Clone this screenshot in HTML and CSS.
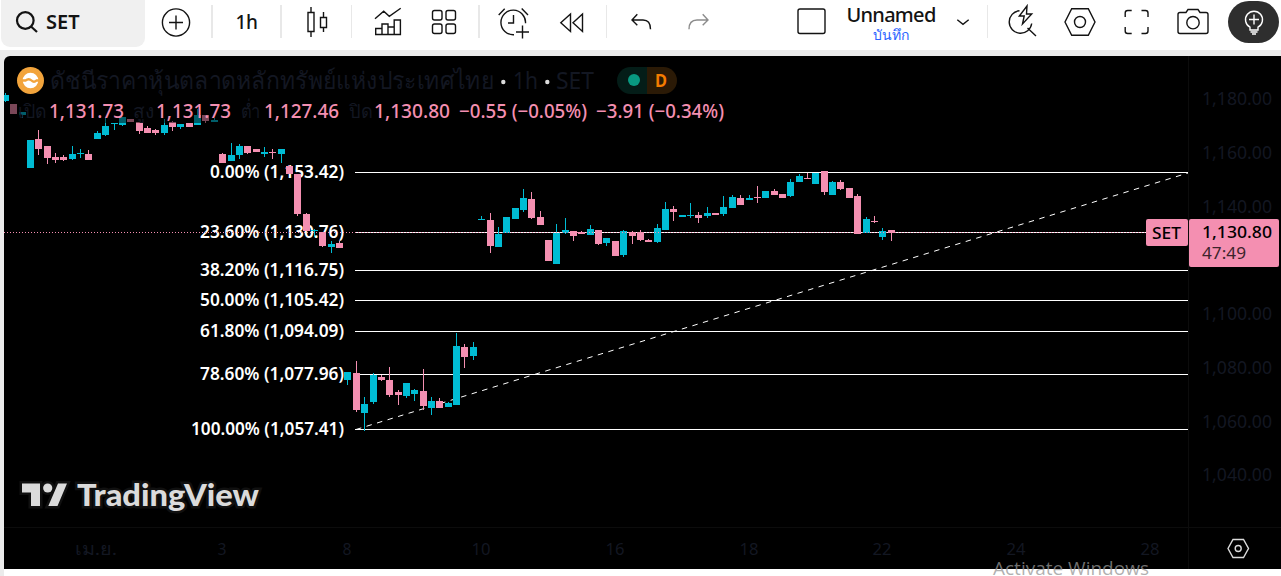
FILE: index.html
```html
<!DOCTYPE html>
<html lang="th">
<head>
    <meta charset="UTF-8" />
    <meta name="viewport" content="width=device-width, initial-scale=1.0" />
    <title>SET 1,130.80</title>
    <link rel="stylesheet" href="styles.css">
</head>
<body>
    <header class="toolbar">
        <div class="search">
            <svg class="search-icon" viewBox="0 0 24 24"><circle cx="10.3" cy="10.5" r="8.3" /><path d="M16 16.5l6 5.5" /></svg>
            <span>SET</span>
        </div>
        <div class="tool tool-add">
            <svg class="icon" viewBox="-18 -22 36 44"><circle cx="0" cy=".5" r="13.6" /><path d="M-7 .5H7M0-6.5v14" /></svg>
        </div>
        <div class="separator"></div>
        <div class="tool interval">1h</div>
        <div class="separator"></div>
        <div class="tool">
            <svg class="icon" viewBox="-18 -22 36 44"><path d="M-9-9.5h6v19h-6zM-6-15v5.500M-6 9.500V15M3.500-4.500h6v10h-6zM6.500-10v5.500M6.500 5.500V10" /></svg>
        </div>
        <div class="separator"></div>
        <div class="tool">
            <svg class="icon" viewBox="-18 -22 36 44"><path d="M-13-3.300l8.700-7.400 5.600 5L12.700-13.700M-12.300 12.500v-6h6.300v-4.500h6v3h6.200V-2h6.200v14.500zM-6 6.500v6M0 5v7.500M6.200 5v7.500" /></svg>
        </div>
        <div class="tool">
            <svg class="icon" viewBox="-18 -22 36 44"><rect x="-11.500" y="-11.500" width="9.500" height="9.500" rx="2" /><rect x="2" y="-11.500" width="9.500" height="9.500" rx="2" /><rect x="-11.500" y="2" width="9.500" height="9.500" rx="2" /><rect x="2" y="2" width="9.500" height="9.500" rx="2" /></svg>
        </div>
        <div></div>
        <div class="separator"></div>
        <div class="tool">
            <svg class="icon" viewBox="-18 -22 36 44"><path d="M11.500 1.300A12.300 12.300 0 1 0 0 12.700M-15.300-7l6-6.300M7.700-13.500l6.300 6.500M-.500-7V1h-5.500M2 10h13M8.500 3.500v13" /></svg>
        </div>
        <div class="tool">
            <svg class="icon" viewBox="-18 -22 36 44"><path d="M-1.500-8l-9.700 8.700 9.700 8.800zM10.500-8L1 .7l9.500 8.800z" /></svg>
        </div>
        <div></div>
        <div class="separator"></div>
        <div class="tool">
            <svg class="icon" viewBox="-18 -22 36 44"><path d="M-3.700-7.700L-9-2l5.300 5.300M-9-2H2c5 0 7.500 3 7.500 9.300" /></svg>
        </div>
        <div class="tool disabled">
            <svg class="icon" viewBox="-18 -22 36 44"><path d="M4.700-7.700L10-2 4.700 3.300M10-2H-1c-5 0-8 3-8 9.300" /></svg>
        </div>
        <div></div>
        <div class="tool">
            <svg class="icon" viewBox="-18 -22 36 44"><rect x="-13" y="-13" width="27" height="24.500" rx="2" /></svg>
        </div>
        <div class="layout-name">
            <span class="name">Unnamed</span>
            <span class="save">บันทึก</span>
        </div>
        <div class="tool tool-menu">
            <svg class="icon" viewBox="-18 -22 36 44"><path d="M-5.700-2.300L0 2.300l5.700-4.600" /></svg>
        </div>
        <div class="separator"></div>
        <div class="tool">
            <svg class="icon" viewBox="-18 -22 36 44"><path d="M-3.500-11.300A11.300 11.300 0 1 0 8.700 1.500M4.500 6l8.500 8M4-16l-7.700 10H1.200L-.5 2 8.700-8H3.500z" /></svg>
        </div>
        <div class="tool">
            <svg class="icon" viewBox="-18 -22 36 44"><path d="M-8.300-13.300H8.300L15 0 8.300 13.200H-8.300L-15 0z" /><circle cx="0" cy="0" r="5.500" /></svg>
        </div>
        <div class="tool">
            <svg class="icon" viewBox="-18 -22 36 44"><path d="M-10.800-5v-4q0-2.500 2.500-2.500h4M5.500-11.500h4q2.500 0 2.500 2.500v4M12 5v4q0 2.500-2.500 2.500h-4M-4.300 11.500h-4q-2.500 0-2.500-2.500V5" /></svg>
        </div>
        <div class="tool">
            <svg class="icon" viewBox="-18 -22 36 44"><path d="M-13-9.500h6L-5-12.500H5l2 3h6q2 0 2 2v17q0 2-2 2h-26q-2 0-2-2v-17q0-2 2-2z" /><circle cx="0" cy=".7" r="6.200" /></svg>
        </div>
        <div class="idea">
            <svg class="icon" viewBox="-18 -22 36 44"><path d="M-4 5.200A8.500 8.500 0 1 1 4 5.200V8h-8zM-5-2.500H5M0-7.500v10M-4.500 8h9M-3.500 10h7M-2 12h4" /></svg>
        </div>
    </header>

    <main class="chart-pane">
        <svg class="chart" viewBox="4 56 1277 513">
            <path class="grid-line" d="M1188.500 56V569M4 527.500H1281" />
            <g id="time-labels" class="axis-text"></g>
            <g id="price-labels" class="axis-text"></g>
            <g id="levels"></g>
            <path class="trend" d="M356 429.500L1188 173" />
            <g id="candles"></g>
            <path class="last-price" d="M4 232.500H1146" />

            <!-- last price tag -->
            <rect class="tag" x="1146" y="219" width="42" height="27" rx="2" />
            <rect class="tag" x="1189" y="219" width="90" height="48" rx="2" />
            <text class="tag-text" x="1152" y="239" textLength="29" lengthAdjust="spacingAndGlyphs">SET</text>
            <text class="tag-text" x="1202" y="238" textLength="70" lengthAdjust="spacingAndGlyphs">1,130.80</text>
            <text class="tag-time" x="1202" y="259" textLength="44" lengthAdjust="spacingAndGlyphs">47:49</text>

            <!-- legend -->
            <rect class="legend-shade" x="9" y="101" width="716" height="22" />
            <circle cx="30.500" cy="80.500" r="13.500" fill="#f2a43c" />
            <circle cx="30.500" cy="80.500" r="7.800" fill="#fff" />
            <path d="M22 80.500h3.500c2.500-2 4.500-1.500 6 0s3.500 1.500 5 0H39" fill="none" stroke="#f2a43c" stroke-width="2.400" />
            <text class="legend-title" x="50" y="89" textLength="444" lengthAdjust="spacingAndGlyphs">ดัชนีราคาหุ้นตลาดหลักทรัพย์แห่งประเทศไทย</text>
            <circle cx="503.300" cy="82" r="2.200" fill="#dbdbdb" />
            <text class="legend-title" x="513" y="89" textLength="25" lengthAdjust="spacingAndGlyphs">1h</text>
            <circle cx="547.300" cy="82" r="2.200" fill="#dbdbdb" />
            <text class="legend-title" x="556" y="89" textLength="38" lengthAdjust="spacingAndGlyphs">SET</text>
            <path d="M647 67h-16.500a13.500 13.500 0 0 0 0 27H647z" fill="#041d18" />
            <path d="M647 67h16.500a13.500 13.500 0 0 1 0 27H647z" fill="#2b1a06" />
            <circle cx="634" cy="80" r="6" fill="#089981" />
            <text class="delayed" x="655" y="87" textLength="12" lengthAdjust="spacingAndGlyphs">D</text>
            <g id="legend-values"></g>

            <g class="brand">
                <path d="M22 483.500H40V506H31V492.500H22zM58 483.500H67L57.500 506H48.300z" />
                <circle cx="47.700" cy="488" r="4.600" />
                <text x="77" y="506" textLength="182" lengthAdjust="spacingAndGlyphs">TradingView</text>
            </g>
            <path class="axis-settings" d="M1233 539.500h10.500l5 9-5 9H1233l-5-9z" />
            <circle class="axis-settings" cx="1238.200" cy="548.500" r="3" />
        </svg>
        <div class="watermark">Activate Windows</div>
    </main>

    <script>
        const NS = "http://www.w3.org/2000/svg";

        // left, direction, body top, body bottom, wick top, wick bottom
        const candles = [
            [2, "u", 95, 101, 93, 102], [10, "d", 104, 114, 104, 114], [19, "u", 112, 115, 112, 118],
            [27, "u", 140, 168, 140, 168], [35, "d", 139, 149, 130, 155], [44, "d", 146, 158, 146, 164],
            [52, "d", 157, 160, 153, 163], [60, "d", 157, 160, 155, 161], [69, "u", 154, 159, 146, 160],
            [77, "u", 153, 154, 149, 158], [85, "d", 154, 160, 150, 160], [94, "u", 133, 139, 131, 139],
            [102, "u", 126, 135, 118, 136], [111, "u", 123, 124, 123, 130], [119, "u", 117, 125, 117, 126],
            [127, "d", 119, 122, 119, 122], [136, "d", 122, 131, 122, 134], [144, "d", 128, 133, 126, 133],
            [152, "d", 130, 133, 129, 135], [161, "u", 125, 133, 119, 135], [169, "d", 122, 127, 121, 131],
            [177, "u", 124, 127, 124, 129], [186, "d", 123, 127, 123, 127], [194, "u", 115, 125, 109, 125],
            [202, "d", 115, 121, 115, 123], [211, "u", 120, 122, 118, 122], [219, "d", 154, 163, 153, 163],
            [228, "u", 155, 161, 143, 161], [236, "u", 146, 155, 144, 159], [244, "d", 146, 153, 146, 154],
            [253, "d", 149, 152, 149, 152], [261, "u", 152, 154, 147, 157], [269, "d", 152, 153, 149, 159],
            [278, "u", 149, 154, 149, 163], [286, "d", 166, 174, 165, 174], [294, "d", 174, 214, 174, 216],
            [303, "d", 214, 231, 213, 231], [311, "u", 230, 231, 229, 237], [319, "d", 232, 246, 232, 247],
            [328, "u", 244, 247, 241, 253], [336, "d", 243, 248, 241, 248], [344, "u", 372, 380, 372, 385],
            [353, "d", 373, 410, 361, 412], [361, "u", 404, 413, 397, 431], [370, "u", 375, 402, 373, 404],
            [378, "d", 377, 380, 375, 381], [386, "d", 380, 395, 367, 397], [395, "d", 392, 395, 390, 405],
            [403, "u", 383, 396, 383, 398], [411, "u", 390, 394, 389, 401], [420, "d", 391, 406, 369, 410],
            [428, "u", 401, 408, 397, 415], [436, "d", 401, 408, 398, 408], [445, "u", 403, 407, 402, 407],
            [453, "u", 346, 405, 333, 405], [461, "d", 347, 357, 344, 368], [470, "u", 347, 356, 342, 360],
            [478, "u", 219, 220, 216, 220], [487, "d", 220, 246, 213, 253], [495, "u", 234, 247, 227, 247],
            [503, "u", 217, 233, 217, 233], [512, "u", 208, 219, 208, 219], [520, "u", 198, 210, 189, 212],
            [528, "d", 199, 218, 192, 219], [537, "d", 217, 225, 211, 225], [545, "d", 240, 261, 240, 261],
            [553, "u", 233, 264, 224, 264], [562, "u", 230, 233, 218, 234], [570, "d", 231, 236, 231, 241],
            [578, "d", 232, 234, 231, 234], [587, "u", 229, 235, 225, 235], [595, "d", 230, 244, 230, 245],
            [603, "u", 238, 243, 238, 246], [612, "d", 241, 256, 241, 256], [620, "u", 231, 255, 230, 257],
            [629, "d", 232, 236, 231, 244], [637, "d", 232, 240, 230, 241], [645, "d", 240, 242, 239, 242],
            [654, "u", 228, 242, 224, 243], [662, "u", 209, 230, 202, 230], [670, "d", 209, 212, 206, 221],
            [679, "u", 215, 217, 215, 217], [687, "u", 215, 216, 203, 218], [695, "d", 215, 218, 212, 223],
            [704, "u", 213, 216, 207, 218], [712, "d", 213, 215, 213, 215], [720, "u", 207, 214, 196, 216],
            [729, "u", 197, 208, 195, 208], [737, "d", 198, 205, 195, 205], [746, "u", 198, 200, 195, 200],
            [754, "d", 197, 198, 186, 203], [762, "u", 191, 198, 191, 198], [771, "d", 191, 195, 189, 195],
            [779, "d", 194, 198, 194, 198], [787, "u", 182, 196, 179, 197], [796, "u", 176, 182, 174, 182],
            [804, "d", 178, 179, 173, 179], [812, "u", 173, 184, 173, 184], [821, "d", 171, 192, 171, 195],
            [829, "u", 182, 195, 181, 195], [837, "d", 182, 189, 180, 190], [846, "d", 188, 198, 188, 198],
            [854, "d", 196, 234, 194, 234], [863, "u", 219, 233, 217, 233], [871, "d", 221, 222, 216, 223],
            [879, "u", 231, 237, 228, 240], [888, "d", 230, 233, 230, 241],
        ];

        // label, y, label left
        const levels = [
            ["0.00% (1,153.42)", 172, 210],
            ["23.60% (1,130.76)", 232, 200],
            ["38.20% (1,116.75)", 270, 200],
            ["50.00% (1,105.42)", 300, 200],
            ["61.80% (1,094.09)", 331, 200],
            ["78.60% (1,077.96)", 374, 200],
            ["100.00% (1,057.41)", 429, 191],
        ];

        const prices = [
            ["1,180.00", 98], ["1,160.00", 152], ["1,140.00", 206], ["1,100.00", 313],
            ["1,080.00", 367], ["1,060.00", 421], ["1,040.00", 474],
        ];

        const times = [
            ["เม.ย.", 96, 42], ["3", 222, 9], ["8", 347, 9], ["10", 481, 19], ["16", 615, 19],
            ["18", 749, 19], ["22", 882, 19], ["24", 1016, 19], ["28", 1150, 19],
        ];

        // text, left, width, class
        const legendValues = [
            ["เปิด", 18, 28, "legend-label"], ["1,131.73", 49, 75, "legend-value"],
            ["สูง", 133, 21, "legend-label"], ["1,131.73", 156, 75, "legend-value"],
            ["ต่ำ", 241, 20, "legend-label"], ["1,127.46", 264, 75, "legend-value"],
            ["ปิด", 349, 23, "legend-label"], ["1,130.80", 374, 76, "legend-value"],
            ["−0.55 (−0.05%)", 459, 128, "legend-value"], ["−3.91 (−0.34%)", 596, 128, "legend-value"],
        ];

        function add(parent, tag, attrs, text) {
            const el = document.createElementNS(NS, tag);
            for (const key in attrs) el.setAttribute(key, attrs[key]);
            if (text) el.textContent = text;
            document.getElementById(parent).appendChild(el);
        }

        function addText(parent, text, x, y, width, cls) {
            add(parent, "text", { x, y, textLength: width, lengthAdjust: "spacingAndGlyphs", class: cls }, text);
        }

        candles.forEach(([x, dir, top, bottom, high, low]) => {
            add("candles", "rect", { x: x + 3, y: high, width: 1, height: low - high, class: dir });
            add("candles", "rect", { x, y: top, width: 7, height: bottom - top, class: dir });
        });

        levels.forEach(([label, y, x]) => {
            add("levels", "rect", { x: 355, y, width: 833, height: 1, class: "level" });
            addText("levels", label, x, y + 6, 344 - x, "level-text");
        });

        prices.forEach(([label, y]) => addText("price-labels", label, 1202, y + 7, 70, "price"));
        times.forEach(([label, x, w]) => addText("time-labels", label, x - w / 2, 555, w, "time"));
        legendValues.forEach(([label, x, w, cls]) => addText("legend-values", label, x, 118, w, cls));
    </script>
</body>
</html>
```
FILE: styles.css
```css
body {
    margin: 0;
    height: 576px;
    overflow: hidden;
    display: flex;
    flex-direction: column;
    background-color: #ebebeb;
    font-family: "Noto Sans", "Open Sans", sans-serif;
    color: #131313;
}

.toolbar {
    box-sizing: border-box;
    height: 50px;
    padding-left: 1px;
    background-color: #fff;
    display: grid;
    grid-template-columns: 144px 66px 2px 67px 2px 69px 1px 72px 40px 14px 2px 68px 48px 10px 1px 68px 46px 66px 48px 112px 40px 1px 70px 44px 68px 46px 63px;
    grid-template-rows: 44px;
}

.search {
    height: 47px;
    box-sizing: border-box;
    padding: 0 0 4px 14px;
    display: flex;
    align-items: center;
    gap: 7px;
    background-color: #f0f0f0;
    border-radius: 0 0 9px 9px;
    font-size: 20px;
    font-weight: 600;
}

.search-icon {
    width: 24px;
    height: 24px;
    fill: none;
    stroke: #131313;
    stroke-width: 2.2;
}

.tool {
    display: flex;
    align-items: center;
    justify-content: center;
}

.tool-add {
    padding-right: 5px;
}

.tool-menu {
    padding-right: 8px;
}

.icon {
    flex: none;
    width: 36px;
    height: 44px;
    fill: none;
    stroke: #131313;
    stroke-width: 1.4;
}

.disabled .icon {
    stroke: #8c8c8c;
}

.interval {
    font-size: 19px;
    font-weight: 500;
    letter-spacing: -0.5px;
}

.separator {
    height: 33px;
    margin-top: 5px;
    background-color: #e8e8e8;
}

.layout-name {
    display: flex;
    flex-direction: column;
    align-items: center;
}

.name {
    font-size: 20px;
    line-height: 30px;
    height: 28px;
    font-weight: 500;
    letter-spacing: -0.7px;
}

.save {
    font-size: 14px;
    line-height: 14px;
    color: #2962ff;
}

.idea {
    width: 51px;
    height: 42px;
    margin-top: 1px;
    justify-self: end;
    border-radius: 21px;
    background-color: #2e2e2e;
    display: flex;
    align-items: center;
    justify-content: center;
}

.idea .icon {
    stroke: #fff;
}

.chart-pane {
    position: relative;
    margin: 6px 0 0 4px;
    height: 520px;
    background-color: #fff;
    border-top-left-radius: 6px;
}

.chart {
    display: block;
    width: 1277px;
    height: 513px;
    background-color: #000;
    border-top-left-radius: 6px;
}

.grid-line {
    fill: none;
    stroke: #0c0c0c;
}

.axis-text {
    fill: #131722;
}

.price {
    font-size: 18px;
}

.time {
    font-size: 17px;
}

.level {
    fill: #fff;
}

.level-text {
    font-size: 17px;
    font-weight: 600;
    fill: #fff;
}

.trend {
    fill: none;
    stroke: #fff;
    stroke-dasharray: 5.5 5.5;
}

.u {
    fill: #00bcd4;
}

.d {
    fill: #f48fb1;
}

.last-price {
    fill: none;
    stroke: #f48fb1;
    stroke-dasharray: 1 2;
}

.tag {
    fill: #f48fb1;
}

.tag-text {
    font-size: 17px;
    font-weight: 500;
    fill: #000;
}

.tag-time {
    font-size: 17px;
    fill: #3d242c;
}

.legend-shade {
    fill: rgba(0, 0, 0, 0.5);
}

.legend-title {
    font-size: 24px;
    fill: #131722;
}

.legend-label {
    font-size: 19px;
    fill: #131722;
}

.legend-value {
    font-size: 19px;
    font-weight: 500;
    fill: #f48fb1;
}

.delayed {
    font-size: 18px;
    font-weight: 700;
    fill: #f57c00;
}

.brand {
    fill: #dbdbdb;
    stroke: #101010;
    stroke-width: 5px;
    paint-order: stroke;
    font-family: Lato, sans-serif;
    font-size: 31px;
    font-weight: 900;
}

.axis-settings {
    fill: none;
    stroke: #dbdbdb;
    stroke-width: 1.4;
}

.watermark {
    position: absolute;
    left: 989px;
    top: 499px;
    font-family: "Open Sans", sans-serif;
    font-size: 19px;
    line-height: 26px;
    white-space: nowrap;
    color: rgba(150, 150, 150, 0.75);
}
```
